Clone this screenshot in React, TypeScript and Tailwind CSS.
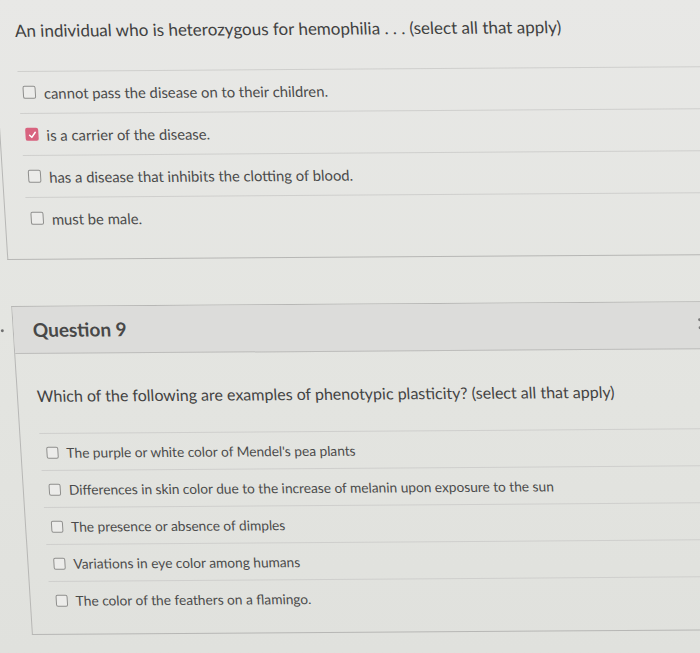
import React from 'react';

interface Option {
  text: string;
  checked?: boolean;
}

const q8Options: Option[] = [
  { text: 'cannot pass the disease on to their children.' },
  { text: 'is a carrier of the disease.', checked: true },
  { text: 'has a disease that inhibits the clotting of blood.' },
  { text: 'must be male.' },
];

const q9Options: Option[] = [
  { text: "The purple or white color of Mendel's pea plants" },
  { text: 'Differences in skin color due to the increase of melanin upon exposure to the sun' },
  { text: 'The presence or absence of dimples' },
  { text: 'Variations in eye color among humans' },
  { text: 'The color of the feathers on a flamingo.' },
];

function Checkbox({ checked, small }: { checked?: boolean; small?: boolean }) {
  const size = small ? 'w-[12px] h-[12px]' : 'w-[13px] h-[13px]';
  if (checked) {
    return (
      <span className={`${size} shrink-0 rounded-[2px] bg-[#d8637f] flex items-center justify-center`}>
        <svg viewBox="0 0 12 12" className="w-[10px] h-[10px]">
          <polyline points="2.5,6.5 5,9 9.5,3" fill="none" stroke="#ffffff" strokeWidth="1.8" strokeLinecap="round" strokeLinejoin="round" />
        </svg>
      </span>
    );
  }
  return <span className={`${size} shrink-0 rounded-[2px] border border-[#8f8f8d] bg-[#ececea]`} />;
}

export default function App() {
  return (
    <div className="w-[700px] h-[653px] overflow-hidden bg-linear-to-b from-[#e8e8e6] via-[#e4e5e1] to-[#e0e1dd] font-['Lato','Liberation_Sans',sans-serif]">
      {/* the page is photographed at a slight angle */}
      <div className="w-[760px] origin-top-left [transform:skewX(3.6deg)_skewY(-0.4deg)]">
        {/* Question 8 (continued) */}
        <div className="ml-[-9px] border-l border-b border-[#b7b7b5] pl-[21px] pb-[20px]">
          <div className="pt-[19px] pb-[28px] text-[17px] leading-[24px] text-[#414141]">
            An individual who is heterozygous for hemophilia . . . (select all that apply)
          </div>
          {q8Options.map((opt) => (
            <div key={opt.text} className="flex items-center h-[42px] border-t border-[#cfcfcd] pl-[4px]">
              <Checkbox checked={opt.checked} />
              <span className="ml-[8px] text-[14.8px] leading-[20px] text-[#4b4b4b]">{opt.text}</span>
            </div>
          ))}
        </div>

        {/* Question 9 */}
        <div className="mt-[46px] ml-[-8px] border-l border-t border-b border-[#b7b7b5]">
          <div className="relative bg-[#dcdcda] border-b border-[#bdbdbb] pl-[19px] pt-[10px] pb-[10px]">
            <span className="text-[19px] leading-[26px] font-bold text-[#484848]">Question 9</span>
            <span className="absolute left-[-13px] top-[22px] w-[3px] h-[3px] rounded-full bg-[#6f6f6f]" />
            <span className="absolute left-[685px] top-[16px] flex flex-col gap-[5px]">
              <span className="w-[3px] h-[3px] rounded-full bg-[#7a7a7a]" />
              <span className="w-[3px] h-[3px] rounded-full bg-[#7a7a7a]" />
            </span>
          </div>
          <div className="pl-[19px] pb-[16px]">
            <div className="pt-[31px] pb-[26px] text-[16px] leading-[22px] text-[#434343]">
              Which of the following are examples of phenotypic plasticity? (select all that apply)
            </div>
            {q9Options.map((opt) => (
              <div key={opt.text} className="flex items-center h-[37px] pt-[2px] border-t border-[#cfcfcd] pl-[6px]">
                <Checkbox small checked={opt.checked} />
                <span className="ml-[8px] text-[13.7px] leading-[20px] text-[#4b4b4b]">{opt.text}</span>
              </div>
            ))}
          </div>
        </div>
      </div>
    </div>
  );
}
